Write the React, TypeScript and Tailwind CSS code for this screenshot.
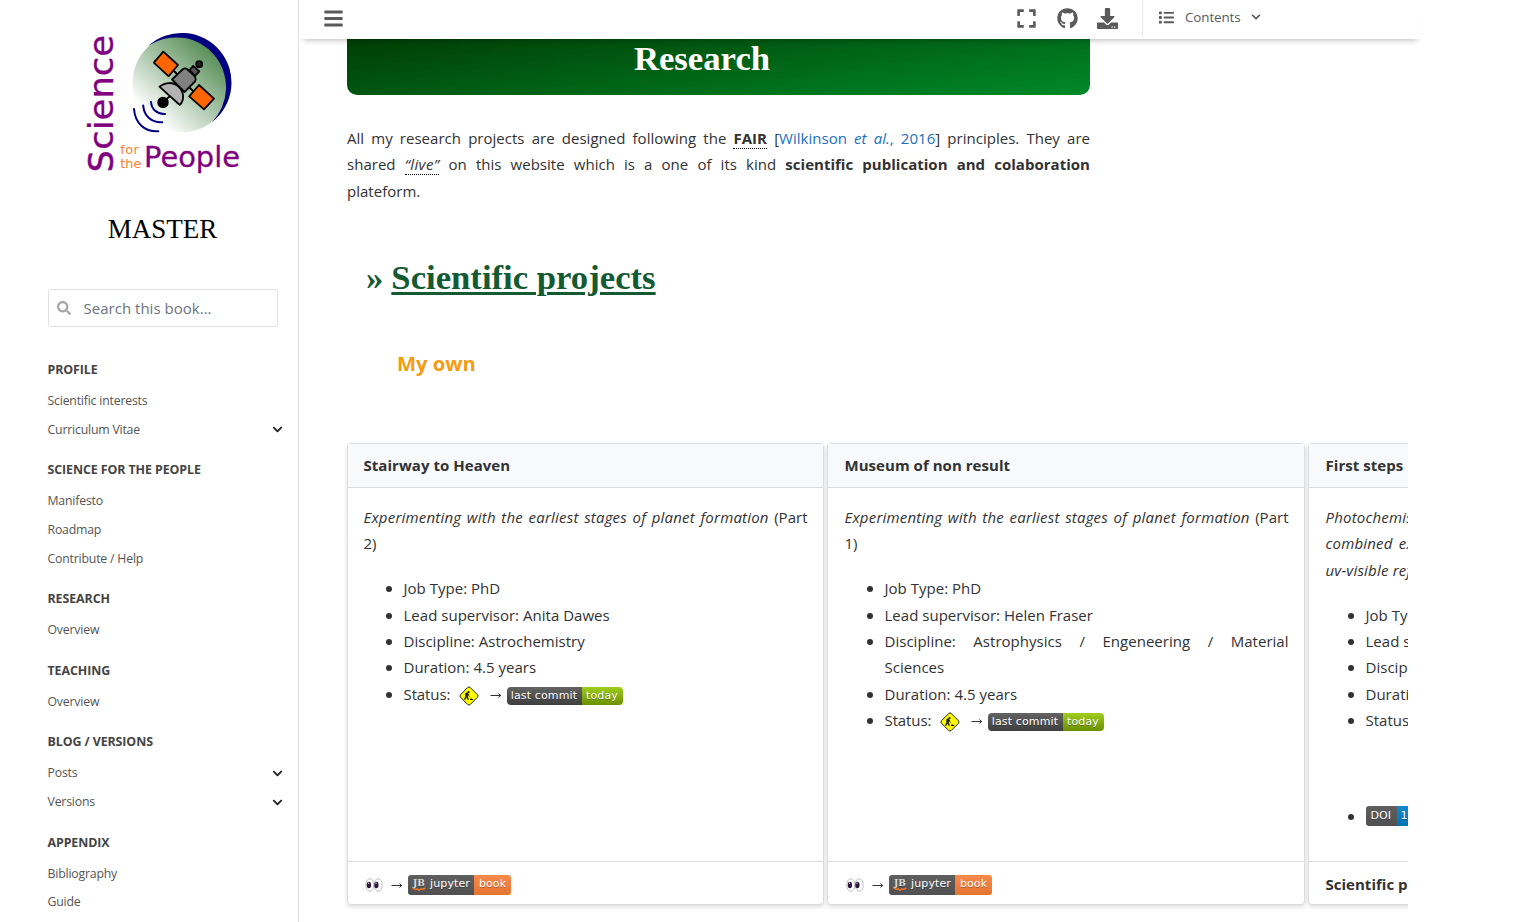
import type { ReactNode } from "react";
import { FaBars, FaChevronDown, FaDownload, FaExpand, FaGithub, FaList, FaSearch } from "react-icons/fa";

type NavItem = { label: string; open?: boolean };
type NavSection = { title: string; items: NavItem[] };

const sections: NavSection[] = [
  { title: "PROFILE", items: [{ label: "Scientific interests" }, { label: "Curriculum Vitae", open: true }] },
  { title: "SCIENCE FOR THE PEOPLE", items: [{ label: "Manifesto" }, { label: "Roadmap" }, { label: "Contribute / Help" }] },
  { title: "RESEARCH", items: [{ label: "Overview" }] },
  { title: "TEACHING", items: [{ label: "Overview" }] },
  { title: "BLOG / VERSIONS", items: [{ label: "Posts", open: true }, { label: "Versions", open: true }] },
  { title: "APPENDIX", items: [{ label: "Bibliography" }, { label: "Guide" }] },
];

function Logo() {
  return (
    <svg width="160" height="146" viewBox="82 30 160 146" className="block">
      <defs>
        <linearGradient id="globe" x1="0.85" y1="0.12" x2="0.2" y2="0.85">
          <stop offset="0" stopColor="#4a854a" />
          <stop offset="1" stopColor="#ffffff" />
        </linearGradient>
      </defs>
      <circle cx="181.8" cy="82.9" r="49.3" fill="url(#globe)" />
      <path d="M148 46.2A49.65 49.65 0 1 1 211.7 122.2A49.8 49.8 0 0 0 148 46.2Z" fill="#000080" />
      <g stroke="#000" strokeWidth="1.8" strokeLinejoin="round">
        <path d="M174 71l5 5M189 87l5 5" />
        <path d="M163.3 51.6L178 65L168.7 76.3L153.8 62.7Z" fill="#ff6600" />
        <path d="M199 85L214 98.7L204 109.4L189.2 96.3Z" fill="#ff6600" />
        <path d="M189.5 70L193.2 65.8L199.3 71.5L195.2 75.8Z" fill="#555" />
        <circle cx="199.2" cy="64.2" r="3" fill="#222" />
        <path d="M172 79.5L183 69Q185 67.8 187 69L195 76.5Q196.5 79 195 81.5L184.5 92Z" fill="#808080" />
        <path d="M163 102.3L170 96" />
        <path d="M159.4 86.7C165 82 173.5 81.5 179 87C184 92 184.6 100 179.8 105Z" fill="#b3b3b3" />
        <circle cx="163" cy="102.4" r="4.8" fill="#000" />
      </g>
      <g stroke="#000080" strokeWidth="2" strokeLinecap="round" fill="none">
        <path d="M151 102C151.5 109 157 114.5 165 114" />
        <path d="M143.2 105.6C144 116 151.5 123 162.3 122.3" />
        <path d="M134 109C135 123 144.5 132 158.3 131.3" />
      </g>
      <g fill="#800080" fontFamily="DejaVu Sans, sans-serif">
        <text transform="translate(112.6 172.2) rotate(-90)" fontSize="34.5" textLength="22" lengthAdjust="spacingAndGlyphs" stroke="#800080" strokeWidth="0.6">S</text>
        <text transform="translate(112.6 149.8) rotate(-90)" fontSize="34.5" textLength="115" lengthAdjust="spacingAndGlyphs" stroke="#800080" strokeWidth="0.3">cience</text>
        <text x="144" y="167" fontSize="29" textLength="96" lengthAdjust="spacingAndGlyphs" stroke="#800080" strokeWidth="0.3">People</text>
      </g>
      <g fill="#ff7f2a" fontFamily="DejaVu Sans, sans-serif" fontSize="12.8">
        <text x="120.3" y="154" textLength="18.5">for</text>
        <text x="120.3" y="167.6" textLength="21">the</text>
      </g>
    </svg>
  );
}

function Sidebar() {
  return (
    <aside className="flex h-full w-[299px] shrink-0 flex-col border-r border-[#dee2e6] bg-white">
      <div className="shrink-0 pl-[82px] pt-[30px]"><Logo /></div>
      <h1 className="mt-[37px] h-8 shrink-0 pl-[27px] text-center font-['Liberation_Serif',serif] text-[27px] leading-8 text-black">MASTER</h1>
      <div className="ml-12 mt-[44px] flex h-[38px] w-[230px] shrink-0 items-center rounded-[3px] border border-[#dfe1e4] pl-[8px]">
        <FaSearch className="h-[14px] w-[14px] text-[#a5a6a9]" />
        <span className="ml-[12.5px] text-[15px] tracking-[0.02px] text-[#6c757d]">Search this book...</span>
      </div>
      <nav className="ml-[47.5px] mt-[33px] w-[235.5px]">
        {sections.map((s) => (
          <section key={s.title} className="mb-[15.9px]">
            <h2 className="mb-[6.8px] h-5 whitespace-nowrap text-[12.4px] font-bold leading-5 tracking-[-0.08px] text-[#444]">{s.title}</h2>
            {s.items.map((i) => (
              <div key={i.label} className="flex h-[28.8px] items-center justify-between text-[12.3px] tracking-[-0.2px] text-[#555]">
                <span>{i.label}</span>
                {i.open && <FaChevronDown className="h-[11px] w-[11px] text-[#222]" />}
              </div>
            ))}
          </section>
        ))}
      </nav>
    </aside>
  );
}

function Topbar() {
  return (
    <header className="relative z-10 flex h-[39px] w-[1123px] shrink-0 bg-white text-[#5a5a5a] shadow-[0_6px_6px_-5px_rgba(0,0,0,0.28)]">
      <div className="flex h-[36px] flex-1 items-center pl-[24px] pr-[24px]">
        <FaBars className="h-[21px] w-[21px]" />
        <div className="ml-auto flex items-center">
          <FaExpand className="mr-[19.5px] h-[21px] w-[21px]" />
          <FaGithub className="mr-[19.5px] h-[21px] w-[21px]" />
          <FaDownload className="h-[21px] w-[21px]" />
        </div>
      </div>
      <div className="flex h-[37px] w-[280px] items-center border-l border-[#e9ebed] pb-[3px] pl-4">
        <FaList className="h-[15px] w-[15px]" />
        <span className="ml-[11px] text-[13.4px] tracking-[-0.1px]">Contents</span>
        <FaChevronDown className="ml-[10px] h-[10px] w-[10px]" />
      </div>
    </header>
  );
}

function Badge({ left, right, kind }: { left: ReactNode; right: string; kind: "commit" | "book" | "doi" }) {
  const box = {
    commit: "h-[18px] rounded-[4px] tracking-[0.15px]",
    book: "h-5 rounded-[3px] tracking-[0.1px]",
    doi: "h-5 rounded-[3px] tracking-normal",
  }[kind];
  const leftBox = {
    commit: "justify-center w-[75px] bg-linear-to-b from-[#636363] to-[#3f3f3f]",
    book: "justify-center w-[66px] bg-linear-to-b from-[#5f5f5f] to-[#505050]",
    doi: "pl-[5px] w-[31px] bg-linear-to-b from-[#5f5f5f] to-[#505050]",
  }[kind];
  const rightBox = {
    commit: "justify-center w-[41px] bg-linear-to-b from-[#9fce1c] to-[#6b8f00]",
    book: "justify-center w-[37px] bg-linear-to-b from-[#f78a4c] to-[#e47431]",
    doi: "pl-[4px] w-[120px] bg-linear-to-b from-[#1288cf] to-[#0074b4]",
  }[kind];
  return (
    <span className={`inline-flex shrink-0 overflow-hidden whitespace-nowrap font-['DejaVu_Sans',sans-serif] text-[11px] text-white [text-shadow:0_1px_0_rgba(1,1,1,0.3)] ${box}`}>
      <span className={`flex items-center ${leftBox}`}>{left}</span>
      <span className={`flex items-center ${rightBox}`}>{right}</span>
    </span>
  );
}

function WorkSign() {
  return (
    <svg width="22" height="22" viewBox="0 0 22 22" className="shrink-0">
      <rect x="4.1" y="4.1" width="13.8" height="13.8" rx="1.8" transform="rotate(45 11 11)" fill="#ffff00" stroke="#1a1a1a" strokeWidth="0.9" />
      <circle cx="10.6" cy="7" r="1.1" fill="#111" />
      <path d="M9.4 7.2L7.4 8.6L7.6 11.2L6.2 14.6H7.3L8.6 12L9.6 14.6H10.6L9.6 11.2L9.9 9.8L12.4 12.6M10 8L11.2 10" fill="#111" stroke="#111" strokeWidth="0.3" />
      <path d="M11.6 14.9Q12.6 13 13.8 13.4L15.8 14.9Z" fill="#111" />
    </svg>
  );
}

function Arrow() {
  return (
    <svg width="12" height="8" viewBox="0 0 12 8" className="shrink-0" fill="none" stroke="#323232" strokeWidth="1">
      <path d="M0.5 4.5H11M8.5 2.5L10.7 4.5L8.5 6.5" />
    </svg>
  );
}

function Eyes() {
  return (
    <svg width="18" height="14" viewBox="0 0 18 14" className="shrink-0">
      <ellipse cx="4.8" cy="7" rx="4" ry="6.3" fill="#fff" stroke="#b5b5b5" strokeWidth="0.9" />
      <ellipse cx="13.2" cy="7" rx="4" ry="6.3" fill="#fff" stroke="#b5b5b5" strokeWidth="0.9" />
      <ellipse cx="3.9" cy="7" rx="2.1" ry="3.3" fill="#2b1440" />
      <ellipse cx="11.4" cy="7" rx="2.1" ry="3.3" fill="#2b1440" />
      <circle cx="3.6" cy="5.2" r="0.6" fill="#fff" />
      <circle cx="11" cy="5.2" r="0.6" fill="#fff" />
    </svg>
  );
}

function JupyterLabel() {
  return (
    <>
      <svg width="14" height="14" viewBox="0 0 14 14" className="mr-1">
        <text x="7" y="8" textAnchor="middle" fontFamily="DejaVu Serif, serif" fontWeight="700" fontSize="9.5" textLength="12" lengthAdjust="spacingAndGlyphs" fill="#ddd">JB</text>
        <path d="M0.5 9.8Q3.5 11.8 5.5 11L7 12.4L8.5 11Q10.5 11.8 13.5 9.8" fill="none" stroke="#f37726" strokeWidth="1.4" />
      </svg>
      jupyter
    </>
  );
}

function Bullet({ children, className = "" }: { children: ReactNode; className?: string }) {
  return (
    <li className={`flex pl-[22px] ${className}`}>
      <span className="mr-3 mt-[11px] h-[6px] w-[6px] shrink-0 rounded-full bg-[#323232]" />
      <div className="min-w-0 flex-1 text-justify">{children}</div>
    </li>
  );
}

function Line({ children }: { children: ReactNode }) {
  return <span className="block whitespace-nowrap text-justify [text-align-last:justify]">{children}</span>;
}

function Status() {
  return (
    <div className="flex h-[26.4px] items-center whitespace-nowrap">
      <span className="w-[54px] shrink-0 tracking-[-0.1px]">Status:</span>
      <span className="flex pt-[4px]"><WorkSign /></span>
      <span className="ml-[10px] mr-[5px] flex pt-[2px]"><Arrow /></span>
      <span className="flex pt-[4px]"><Badge kind="commit" left="last commit" right="today" /></span>
    </div>
  );
}

function Card({ title, children, footer, first = false }: { title: string; children: ReactNode; footer: ReactNode; first?: boolean }) {
  const width = first ? "w-[477px]" : "w-[478px]";
  const pad = first ? "pl-[15.5px] pr-[15.5px]" : "pl-[16.5px] pr-[15.5px]";
  return (
    <article className={`flex h-[462px] shrink-0 flex-col rounded-[4px] border border-[#dcdddf] bg-white shadow-[0_2px_4px_rgba(0,0,0,0.14)] ${width}`}>
      <div className={`h-[44px] border-b border-[#d9dbdd] bg-[#f7f9fb] text-[15px] font-bold leading-[43px] tracking-[0.04px] ${pad}`}>{title}</div>
      <div className={`flex-1 pt-4 text-justify ${pad}`}>{children}</div>
      <div className={`flex h-[43px] items-center border-t border-[#dcdddf] pt-[2px] ${pad}`}>{footer}</div>
    </article>
  );
}

const bookFooter = (
  <div className="flex items-center pl-[1.5px] pt-[1px]">
    <Eyes />
    <span className="ml-2 mr-[5px] flex"><Arrow /></span>
    <Badge kind="book" left={<JupyterLabel />} right="book" />
  </div>
);

export default function App() {
  return (
    <div className="flex h-[922px] w-[1515px] overflow-hidden bg-white font-['Open_Sans',sans-serif] text-[15px] leading-[26.4px] tracking-[0.02px] text-[#323232]">
      <Sidebar />
      <div className="flex min-w-0 flex-1 flex-col">
        <Topbar />
        <main className="w-[1109px] flex-1 overflow-hidden pl-12">
          <div className="h-[56px] w-[743px] rounded-b-[10px] bg-[linear-gradient(172deg,#003d04,#008929)] pr-[33px] text-center font-['Liberation_Serif',serif] text-[34.7px] font-bold leading-[39px] tracking-normal text-white">
            Research
          </div>
          <p className="mt-[30px] w-[743px]">
            <Line>
              All my research projects are designed following the <span className="border-b border-dotted border-black font-bold">FAIR</span> [<span className="text-[#1a6fc0]">Wilkinson <i>et al.</i>, 2016</span>] principles. They are
            </Line>
            <Line>
              shared <i className="border-b border-dotted border-black tracking-[0.4px]">“live”</i> on this website which is a one of its kind <b>scientific publication and colaboration</b>
            </Line>
            plateform.
          </p>
          <h2 className="mt-[53px] flex h-[42px] gap-[8px] pl-[19px] font-['Liberation_Serif',serif] text-[34.7px] font-bold leading-[42px] tracking-normal text-[#145a32]">
            <span>»</span>
            <span className="underline decoration-[3px] underline-offset-[3px]">Scientific projects</span>
          </h2>
          <h3 className="mt-[48px] h-8 pl-[50px] text-[20.2px] font-bold leading-8 tracking-normal text-[#f39c12]">My own</h3>
          <div className="mt-[63.8px] flex gap-[3px]">
            <Card first title="Stairway to Heaven" footer={bookFooter}>
              <p>
                <Line><i className="tracking-[0.2px]">Experimenting with the earliest stages of planet formation</i> (Part</Line>
                2)
              </p>
              <ul className="mt-[18.4px]">
                <Bullet>Job Type: PhD</Bullet>
                <Bullet>Lead supervisor: Anita Dawes</Bullet>
                <Bullet>Discipline: Astrochemistry</Bullet>
                <Bullet>Duration: 4.5 years</Bullet>
                <Bullet><Status /></Bullet>
              </ul>
            </Card>
            <Card title="Museum of non result" footer={bookFooter}>
              <p>
                <Line><i className="tracking-[0.2px]">Experimenting with the earliest stages of planet formation</i> (Part</Line>
                1)
              </p>
              <ul className="mt-[18.4px]">
                <Bullet>Job Type: PhD</Bullet>
                <Bullet>Lead supervisor: Helen Fraser</Bullet>
                <Bullet>
                  <Line>Discipline: Astrophysics / Engeneering / Material</Line>
                  Sciences
                </Bullet>
                <Bullet>Duration: 4.5 years</Bullet>
                <Bullet><Status /></Bullet>
              </ul>
            </Card>
            <Card title="First steps" footer={<b className="whitespace-nowrap">Scientific publication</b>}>
              <p className="italic tracking-[0.2px]">
                Photochemistry<br />
                <span className="[word-spacing:2px]">combined experimental</span><br />
                uv-visible reflectance
              </p>
              <ul className="mt-[18.4px]">
                <Bullet>Job Type: PhD</Bullet>
                <Bullet>Lead supervisor</Bullet>
                <Bullet>Discipline</Bullet>
                <Bullet>Duration</Bullet>
                <Bullet>Status</Bullet>
                <Bullet className="mt-[69px]">
                  <div className="flex h-[26.4px] items-center pt-[1px]"><Badge kind="doi" left="DOI" right="10.5281/zenodo" /></div>
                </Bullet>
              </ul>
            </Card>
          </div>
        </main>
      </div>
    </div>
  );
}
